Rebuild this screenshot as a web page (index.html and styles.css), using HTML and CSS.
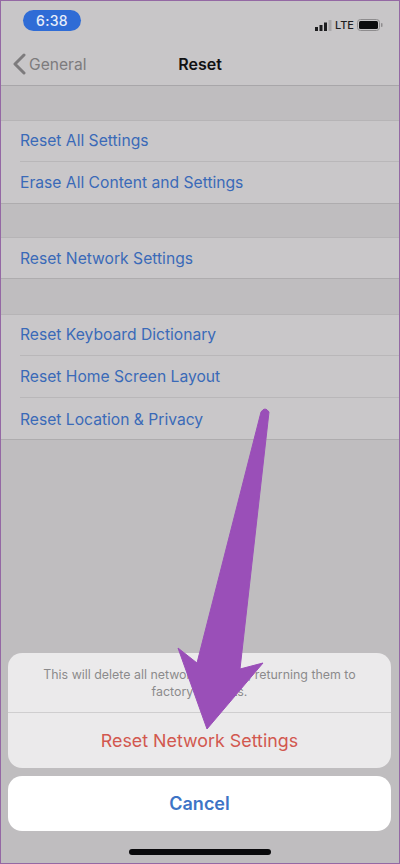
FILE: index.html
```html
<!DOCTYPE html>
<html lang="en">
<head>
<meta charset="utf-8">
<title>Reset</title>
<link rel="stylesheet" href="styles.css">
</head>
<body>
<div class="phone">
  <header class="top">
    <div class="status">
      <span class="time">6:38</span>
      <div class="status-right">
        <svg class="signal" width="17" height="11" viewBox="0 0 17 11"><rect x="0" y="7" width="3" height="4" fill="#1d1d1f"/><rect x="4.500" y="5" width="3" height="6" fill="#1d1d1f"/><rect x="9" y="2.500" width="3" height="8.500" fill="#1d1d1f"/><rect x="13.500" y="0" width="3" height="11" fill="#a9a7a9"/></svg>
        <span class="lte">LTE</span>
        <svg class="battery" width="26" height="12" viewBox="0 0 26 12"><rect x="0.500" y="0.500" width="22" height="11" rx="3" fill="none" stroke="#8e8c8e"/><rect x="2" y="2" width="19" height="8" rx="1.500" fill="#0c0c0e"/><rect x="24" y="4" width="1.500" height="4" rx="0.700" fill="#8e8c8e"/></svg>
      </div>
    </div>
    <nav class="navbar">
      <div class="back">
        <svg width="14" height="22" viewBox="0 0 14 22"><path d="M12 2 L3 11 L12 20" fill="none" stroke="#7d7b7d" stroke-width="3" stroke-linecap="round" stroke-linejoin="round"/></svg>
        <span>General</span>
      </div>
      <h1 class="title">Reset</h1>
    </nav>
  </header>

  <section class="group first">
    <div class="row">Reset All Settings</div>
    <div class="row">Erase All Content and Settings</div>
  </section>
  <section class="group second">
    <div class="row">Reset Network Settings</div>
  </section>
  <section class="group third">
    <div class="row">Reset Keyboard Dictionary</div>
    <div class="row">Reset Home Screen Layout</div>
    <div class="row">Reset Location &amp; Privacy</div>
  </section>

  <div class="sheet">
    <div class="sheet-main">
      <p class="sheet-msg">This will delete all network settings, returning them to factory defaults.</p>
      <div class="sheet-action">Reset Network Settings</div>
    </div>
    <div class="sheet-cancel">Cancel</div>
  </div>
  <div class="home-wrap"><div class="home"></div></div>

  <svg class="arrow" width="400" height="864" viewBox="0 0 400 864"><path d="M261 412 Q265 406 269 412 L240 669 L263 663 L207 729 L178 648 L197 663 Z" fill="#9a4fb8" stroke="#9a4fb8" stroke-width="1" stroke-linejoin="round"/></svg>
</div>
</body>
</html>
```
FILE: styles.css
```css
* { box-sizing: border-box; }
html, body { margin: 0; padding: 0; }
body { font-family: Inter, "Liberation Sans", sans-serif; background: #bfbdbf; }
.phone {
  position: relative;
  width: 400px;
  height: 864px;
  overflow: hidden;
  display: flex;
  flex-direction: column;
  background: #bfbdbf;
  border: 1px solid #9468a4;
}
.top { height: 85px; background: #c8c6c8; border-bottom: 1px solid #a8a6a9; flex: none; }
.status { display: flex; justify-content: space-between; align-items: flex-start; height: 42px; padding: 9px 16px 0 22px; }
.time {
  width: 58px; height: 21px; border-radius: 11px; background: #2f6cd6; color: #e8eefa;
  font-size: 14px; font-weight: 500; line-height: 21px; text-align: center; letter-spacing: 0.3px;
}
.status-right { display: flex; align-items: center; gap: 3px; margin-top: 9px; }
.lte { font-size: 11px; font-weight: 500; color: #1d1d1f; line-height: 12px; }
.navbar { position: relative; height: 42px; display: flex; align-items: center; justify-content: center; }
.back { position: absolute; left: 11px; top: 0; height: 42px; display: flex; align-items: center; gap: 3px; color: #7d7b7d; font-size: 15.600px; }
.title { margin: 0; font-size: 16px; font-weight: 600; color: #111113; }
.group { background: #c9c7c9; box-shadow: inset 0 1px 0 #b6b4b6, inset 0 -1px 0 #aeacae; flex: none; }
.first { margin-top: 34px; }
.second { margin-top: 33px; }
.third { margin-top: 35px; }
.row { height: 42px; line-height: 42px; margin-left: 19px; color: #3a6ab8; font-size: 15.650px; border-bottom: 1px solid #b9b7b9; }
.row:last-child { border-bottom: 0; }
.second .row, .third .row:last-child { line-height: 44px; }
.sheet { margin-top: auto; padding: 0 8px 0 7px; flex: none; }
.sheet-main { background: #ebeaeb; border-radius: 14px; overflow: hidden; }
.sheet-msg {
  margin: 0; height: 60px; padding: 13px 30px 0; text-align: center; font-size: 12.400px; line-height: 17px;
  color: #8b8a8c; border-bottom: 1px solid #cfcecf;
}
.sheet-action { height: 55px; line-height: 56px; text-align: center; color: #d2584f; font-size: 17.850px; }
.sheet-cancel {
  margin-top: 8px; height: 55px; line-height: 55px; background: #fff; border-radius: 14px;
  text-align: center; color: #3d74c6; font-size: 18px; font-weight: 600;
}
.home-wrap { height: 32px; padding-top: 18px; flex: none; display: flex; justify-content: center; }
.home { width: 142px; height: 6px; border-radius: 3px; background: #0a0a0c; }
.arrow { position: absolute; left: -1px; top: -1px; }
```
